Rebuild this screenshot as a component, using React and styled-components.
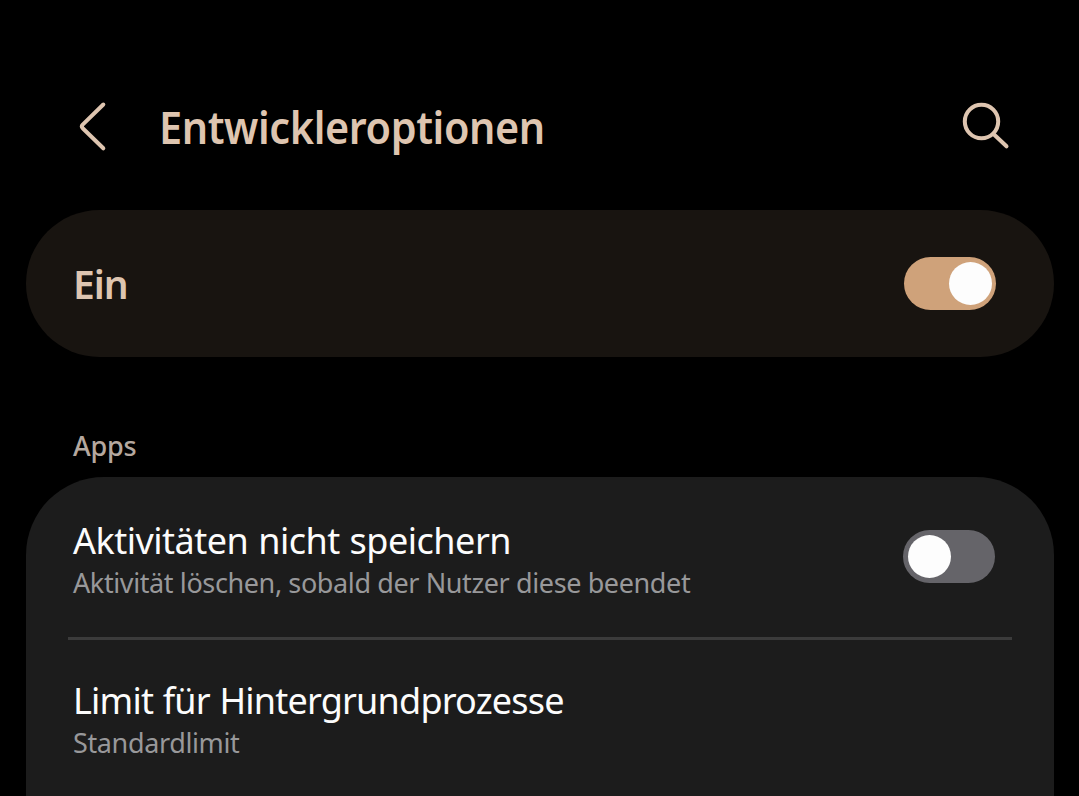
import React from 'react';
import styled, { createGlobalStyle } from 'styled-components';

const GlobalStyle = createGlobalStyle`
    body {
        margin: 0;
        background-color: #000;
        overflow: hidden;
    }
`;

const Screen = styled.div`
    width: 1079px;
    height: 796px;
    box-sizing: border-box;
    padding: 0 25px 0 26px;
    overflow: hidden;
    background-color: #000;
    font-family: 'Noto Sans', sans-serif;
`;

const Header = styled.header`
    display: flex;
    align-items: flex-start;
    height: 210px;
    box-sizing: border-box;
    padding: 96px 42px 0 50px;
    color: #dec5b0;
`;

const BackIcon = styled.svg`
    width: 34px;
    height: 60px;
`;

const SearchIcon = styled.svg`
    width: 54px;
    height: 60px;
`;

const PageTitle = styled.h1`
    flex: 1;
    margin: 0 0 0 49px;
    font-size: 44.5px;
    line-height: 61px;
    font-weight: 600;
    white-space: nowrap;
    letter-spacing: ${props => props.$spacing}px;
    transform: scaleX(0.93);
    transform-origin: left;
`;

const MainSwitch = styled.div`
    display: flex;
    align-items: center;
    justify-content: space-between;
    height: 147px;
    box-sizing: border-box;
    padding: 0 58px 0 47px;
    border-radius: 74px;
    background-color: #181410;
`;

const MainLabel = styled.div`
    font-size: 39px;
    line-height: 52px;
    font-weight: 600;
    letter-spacing: -1px;
    color: #dec5b0;
`;

const SectionTitle = styled.h2`
    height: 120px;
    box-sizing: border-box;
    margin: 0;
    padding: 70px 0 0 47px;
    font-size: 27px;
    line-height: 38px;
    font-weight: 500;
    letter-spacing: ${props => props.$spacing}px;
    color: #b5a89f;
`;

const Card = styled.section`
    height: 340px;
    padding: 0 42px;
    border-radius: 78px 78px 0 0;
    background-color: #1c1c1c;
`;

const Row = styled.div`
    display: flex;
    align-items: center;
    justify-content: space-between;
    height: 160px;
    box-sizing: border-box;
    padding: 0 17px 4px 5px;
    border-top: 3px solid ${props => (props.$divider ? '#3b3b3b' : 'transparent')};
`;

const RowText = styled.div`
    align-self: flex-start;
    padding-top: 37px;
    white-space: nowrap;
`;

const RowTitle = styled.div`
    font-size: 36px;
    line-height: 48px;
    letter-spacing: ${props => props.$spacing}px;
    word-spacing: 1px;
    color: #fcfcfc;
`;

const RowSummary = styled.div`
    font-size: 27px;
    line-height: 36px;
    letter-spacing: ${props => props.$spacing}px;
    color: #98989a;
`;

const Track = styled.div`
    display: flex;
    align-items: center;
    justify-content: ${props => (props.$on ? 'flex-end' : 'flex-start')};
    width: 92px;
    height: 53px;
    box-sizing: border-box;
    padding: 0 ${props => (props.$on ? 4 : 5)}px;
    border-radius: 27px;
    background-color: ${props => (props.$on ? '#cfa27a' : '#656469')};
`;

const Thumb = styled.div`
    width: 43px;
    height: 43px;
    border-radius: 50%;
    background-color: #fdfdfd;
`;

const Toggle = ({ on }) => (
    <Track role="switch" aria-checked={on} $on={on}>
        <Thumb />
    </Track>
);

const App = () => {
    return (
        <>
            <GlobalStyle />
            <Screen>
                <Header>
                    <BackIcon viewBox="0 0 34 60" fill="none" stroke="currentColor" strokeWidth="4" strokeLinecap="round" strokeLinejoin="round">
                        <path d="M27.3 8.5L6.7 28.6Q5 30.4 6.7 32.2L27.3 52.3" />
                    </BackIcon>
                    <PageTitle $spacing={-0.43}>Entwickleroptionen</PageTitle>
                    <SearchIcon viewBox="0 0 54 60" fill="none" stroke="currentColor" strokeWidth="4" strokeLinecap="round">
                        <circle cx="23.5" cy="25.5" r="16.7" />
                        <path d="M35.5 38L48.5 50.3" />
                    </SearchIcon>
                </Header>
                <MainSwitch>
                    <MainLabel>Ein</MainLabel>
                    <Toggle on={true} />
                </MainSwitch>
                <SectionTitle $spacing={-0.2}>Apps</SectionTitle>
                <Card>
                    <Row>
                        <RowText>
                            <RowTitle $spacing={-0.5}>Aktivitäten nicht speichern</RowTitle>
                            <RowSummary $spacing={-0.39}>Aktivität löschen, sobald der Nutzer diese beendet</RowSummary>
                        </RowText>
                        <Toggle on={false} />
                    </Row>
                    <Row $divider>
                        <RowText>
                            <RowTitle $spacing={-0.79}>Limit für Hintergrundprozesse</RowTitle>
                            <RowSummary $spacing={-0.37}>Standardlimit</RowSummary>
                        </RowText>
                    </Row>
                </Card>
            </Screen>
        </>
    );
};

export default App;
